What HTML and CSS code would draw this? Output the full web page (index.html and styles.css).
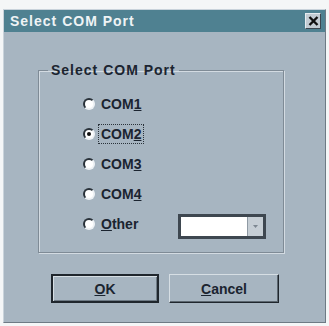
FILE: index.html
```html
<!DOCTYPE html>
<html>
<head>
<meta charset="utf-8">
<link rel="stylesheet" href="styles.css">
</head>
<body>
<div class="dialog">
  <div class="titlebar">
    <span class="title">Select COM Port</span>
    <span class="close"><svg width="11" height="10" viewBox="0 0 11 10"><path d="M1.5 1 L9.5 9 M9.5 1 L1.5 9" stroke="#111" stroke-width="2.4"/></svg></span>
  </div>
  <div class="content">
    <fieldset class="group">
      <legend class="legend">Select COM Port</legend>
      <div class="options">
        <div class="opt"><span class="radio"></span><span class="lbl">COM<u>1</u></span></div>
        <div class="opt"><span class="radio checked"></span><span class="lbl focus">COM<u>2</u></span></div>
        <div class="opt"><span class="radio"></span><span class="lbl">COM<u>3</u></span></div>
        <div class="opt"><span class="radio"></span><span class="lbl">COM<u>4</u></span></div>
        <div class="opt"><span class="radio"></span><span class="lbl"><u>O</u>ther</span>
          <span class="combo"><span class="field"></span><span class="drop"><svg width="5" height="3" viewBox="0 0 5 3"><path d="M0 0 H5 L2.5 3 Z" fill="#7d8791"/></svg></span></span>
        </div>
      </div>
    </fieldset>
    <div class="buttons">
      <button class="btn default"><u>O</u>K</button>
      <button class="btn cancel"><u>C</u>ancel</button>
    </div>
  </div>
</div>
</body>
</html>
```

FILE: styles.css
```css
html, body {
  margin: 0;
  padding: 0;
  background: #f4f6f7;
}
body {
  padding: 9px 0 0 3px;
  font-family: "Liberation Sans", Arial, sans-serif;
  font-weight: bold;
  font-size: 14px;
  color: #1b2430;
}
.dialog {
  width: 321px;
  height: 312px;
  background: #a7b5c1;
  border: 1px solid;
  border-color: #c9d3db #6e7a85 #6e7a85 #c9d3db;
  display: flex;
  flex-direction: column;
}
.titlebar {
  height: 22px;
  background: #4f8191;
  display: flex;
  align-items: center;
  justify-content: space-between;
  padding: 0 4px 0 6px;
}
.title {
  color: #eef3f5;
  font-size: 14px;
  letter-spacing: 1px;
}
.close {
  width: 14px;
  height: 14px;
  background: #c3ccd3;
  border: 1px solid;
  border-color: #e6ecf0 #3d4750 #3d4750 #e6ecf0;
  display: flex;
  align-items: center;
  justify-content: center;
}
.content {
  padding: 30px 0 0 34px;
}
.group {
  margin: 0;
  padding: 0;
  width: 244px;
  height: 189px;
  border: 1px solid #7f8b96;
  box-shadow: inset 1px 1px 0 #d3dbe2, 1px 1px 0 #d3dbe2;
}
.legend {
  margin-left: 9px;
  padding: 0 3px;
  line-height: 16px;
  letter-spacing: 1px;
}
.options {
  display: flex;
  flex-direction: column;
  padding: 11px 0 0 44px;
}
.opt {
  height: 30px;
  display: flex;
  align-items: center;
  gap: 3px;
}
.radio {
  width: 12px;
  height: 12px;
  border-radius: 50%;
  box-sizing: border-box;
  background: #ffffff;
  border: 2px solid;
  border-color: #2a323a #eef2f5 #eef2f5 #2a323a;
  display: flex;
  align-items: center;
  justify-content: center;
}
.radio.checked::after {
  content: "";
  width: 4px;
  height: 4px;
  border-radius: 50%;
  background: #111;
}
.lbl {
  padding: 1px 2px;
  border: 1px solid transparent;
}
.lbl.focus {
  border: 1px dotted #2a323a;
}
.combo {
  margin-left: 34px;
  width: 88px;
  height: 25px;
  box-sizing: border-box;
  border: 3px solid #3e4750;
  background: #ffffff;
  display: flex;
  margin-top: 4px;
}
.field {
  flex: 1;
  background: #ffffff;
}
.drop {
  width: 15px;
  background: #c6ced5;
  border-left: 1px solid #8f9aa4;
  display: flex;
  align-items: center;
  justify-content: center;
}
.buttons {
  display: flex;
  gap: 10px;
  padding: 21px 0 0 13px;
}
.btn {
  height: 29px;
  box-sizing: border-box;
  background: #a7b5c1;
  font-family: "Liberation Sans", Arial, sans-serif;
  font-weight: bold;
  font-size: 14px;
  color: #1b2430;
  padding: 0;
}
.btn.default {
  width: 108px;
  border: 2px solid #1f262d;
  box-shadow: inset 1px 1px 0 #d6dee4, inset -1px -1px 0 #6e7a85;
}
.btn.cancel {
  width: 110px;
  border: 1px solid;
  border-color: #d6dee4 #1f262d #1f262d #d6dee4;
  box-shadow: inset -1px -1px 0 #5c6770;
}
```
